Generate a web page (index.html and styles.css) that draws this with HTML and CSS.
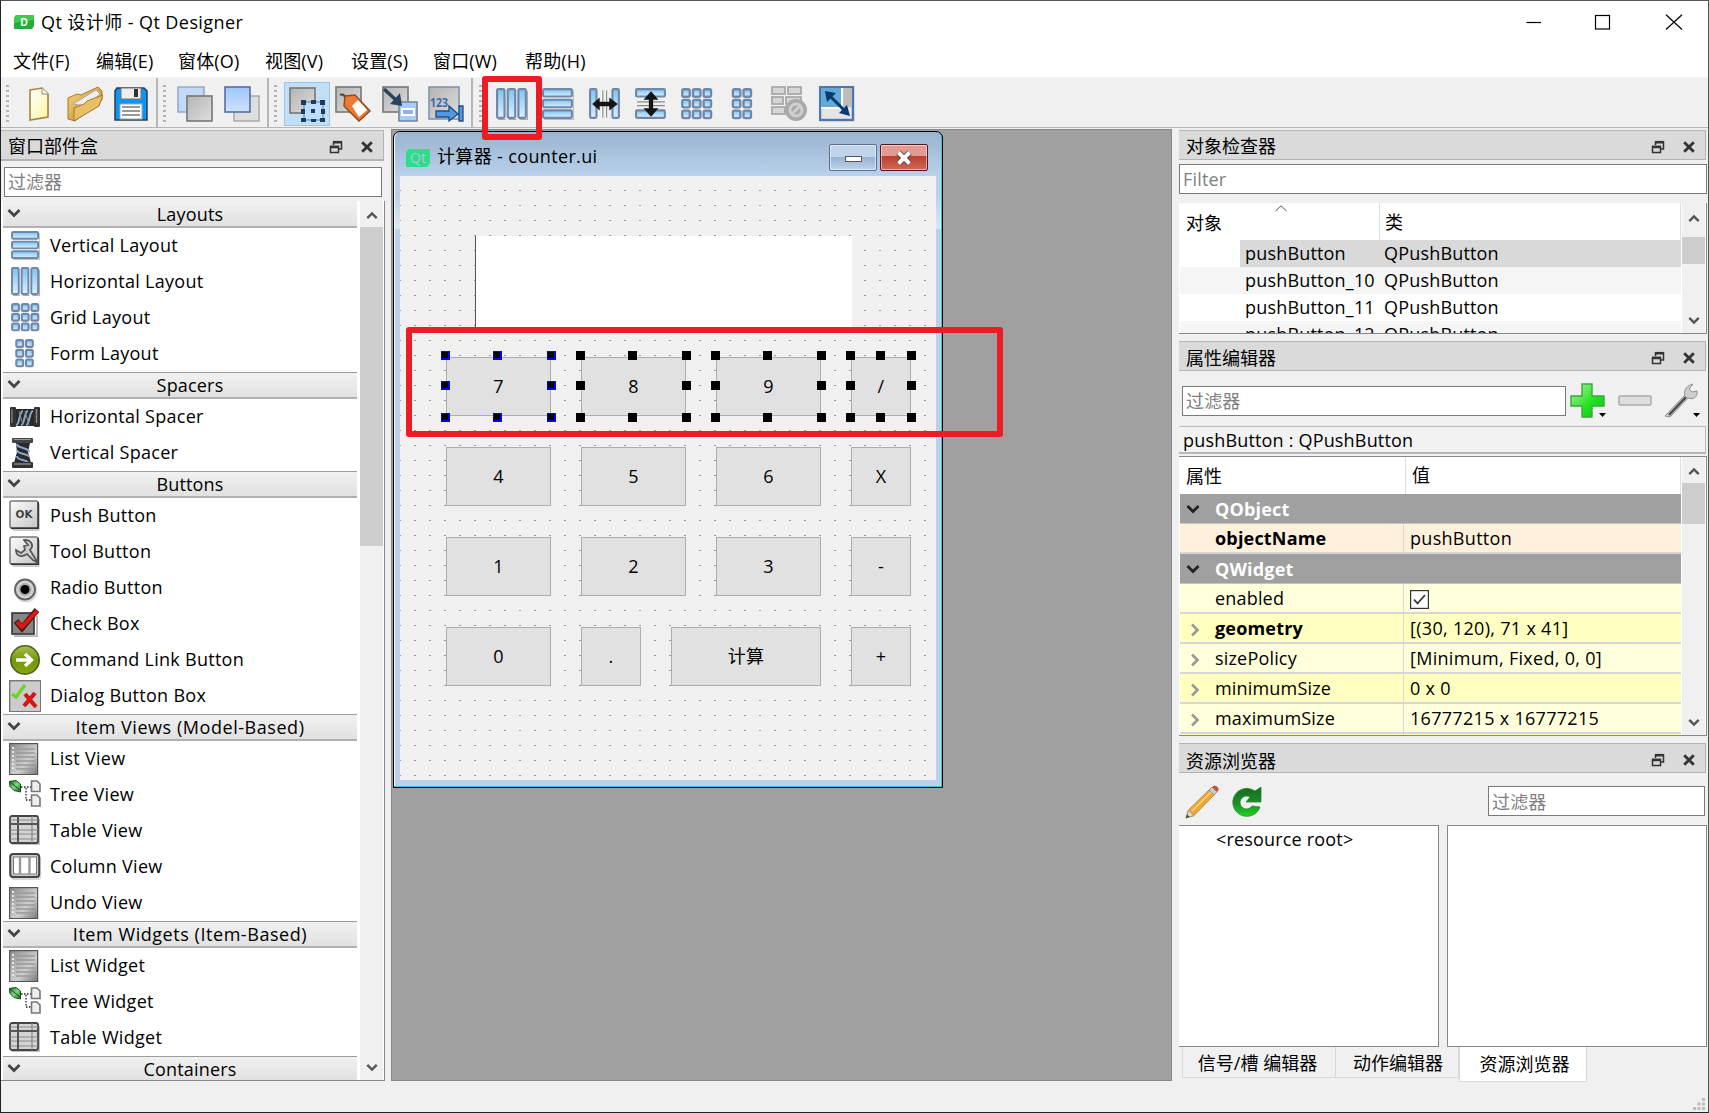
FILE: index.html
```html
<!DOCTYPE html>
<html lang="zh-CN">
<head>
<meta charset="utf-8">
<title>Qt 设计师 - Qt Designer</title>
<link rel="stylesheet" href="styles.css">
</head>
<body>
<svg class="defs" width="0" height="0">
  <defs>
    <linearGradient id="gBlue" x1="0" y1="0" x2="0" y2="1"><stop offset="0" stop-color="#7cc4f2"/><stop offset="1" stop-color="#dcf0ff"/></linearGradient>
    <linearGradient id="gBlue2" x1="0" y1="0" x2="0" y2="1"><stop offset="0" stop-color="#9ec6fb"/><stop offset="1" stop-color="#cfe2fc"/></linearGradient>
    <linearGradient id="gGray" x1="0" y1="0" x2="1" y2="1"><stop offset="0" stop-color="#b4b4b4"/><stop offset="1" stop-color="#dedede"/></linearGradient>
    <linearGradient id="gList" x1="0" y1="0" x2="1" y2="1"><stop offset="0" stop-color="#8a8a8a"/><stop offset=".6" stop-color="#cfcfcf"/><stop offset="1" stop-color="#777"/></linearGradient>
    <linearGradient id="gBtn" x1="0" y1="0" x2="1" y2="1"><stop offset="0" stop-color="#fdfdfd"/><stop offset="1" stop-color="#c4c4c4"/></linearGradient>
    <linearGradient id="gPage" x1="0" y1="0" x2="1" y2="1"><stop offset="0" stop-color="#ffffff"/><stop offset="1" stop-color="#fdf6a0"/></linearGradient>
    <linearGradient id="gGold" x1="0" y1="0" x2="1" y2="1"><stop offset="0" stop-color="#fbd982"/><stop offset="1" stop-color="#b87d1c"/></linearGradient>
    <linearGradient id="gGreen" x1="0" y1="0" x2="0" y2="1"><stop offset="0" stop-color="#0f6d1b"/><stop offset=".6" stop-color="#1f8f2b"/><stop offset="1" stop-color="#19dc19"/></linearGradient>
    <linearGradient id="gPlus" x1="0" y1="0" x2="1" y2="1"><stop offset="0" stop-color="#b4f5a4"/><stop offset=".6" stop-color="#1fe01f"/><stop offset="1" stop-color="#0cc40c"/></linearGradient>
    <linearGradient id="gOlive" x1="0" y1="0" x2="0" y2="1"><stop offset="0" stop-color="#a9bf4d"/><stop offset=".5" stop-color="#6f9a08"/><stop offset="1" stop-color="#86a510"/></linearGradient>
    <linearGradient id="gLeaf" x1="0" y1="0" x2="1" y2="1"><stop offset="0" stop-color="#1d5c22"/><stop offset=".5" stop-color="#7fd884"/><stop offset="1" stop-color="#1b6b22"/></linearGradient>
  </defs>
  <symbol id="chev-down" viewBox="0 0 14 10"><path d="M1.500 2 7 7.500 12.500 2" fill="none" stroke="currentColor" stroke-width="2.800"/></symbol>
  <symbol id="chev-up" viewBox="0 0 14 10"><path d="M1.500 8 7 2.500 12.500 8" fill="none" stroke="currentColor" stroke-width="2.800"/></symbol>
  <symbol id="chev-right" viewBox="0 0 10 14"><path d="M2 1.500 7.500 7 2 12.500" fill="none" stroke="currentColor" stroke-width="2.600"/></symbol>
  <symbol id="float" viewBox="0 0 14 14"><path d="M4.500 5V2H12.500V9H9.500" fill="none" stroke="#333" stroke-width="1.500"/><path d="M4 2.200H13" stroke="#333" stroke-width="2.600"/><rect x="1.500" y="6.500" width="8" height="6" fill="none" stroke="#333" stroke-width="1.500"/><path d="M1 7H10" stroke="#333" stroke-width="2.500"/></symbol>
  <symbol id="close" viewBox="0 0 12 12"><path d="M1.200 1.200 10.800 10.800M10.800 1.200 1.200 10.800" stroke="#333" stroke-width="2.800"/></symbol>

  <symbol id="vlay" viewBox="0 0 30 30"><path d="M2 29.500H29.500V2" fill="none" stroke="#999" stroke-opacity=".6"/><g fill="url(#gBlue)" stroke="#7187a8" stroke-width="2"><rect x="1" y="1" width="27" height="7" rx="1.200"/><rect x="1" y="11" width="27" height="7" rx="1.200"/><rect x="1" y="21" width="27" height="7" rx="1.200"/></g></symbol>
  <symbol id="hlay" viewBox="0 0 30 30"><path d="M2 29.500H9M12 29.500H19M22 29.500H29.500V3" fill="none" stroke="#aaa"/><g fill="url(#gBlue)" stroke="#7187a8" stroke-width="2"><rect x="1" y="1" width="7" height="27" rx="1.200"/><rect x="11" y="1" width="7" height="27" rx="1.200"/><rect x="21" y="1" width="7" height="27" rx="1.200"/></g></symbol>
  <symbol id="glay" viewBox="0 0 30 30"><g fill="url(#gBlue)" stroke="#7187a8" stroke-width="2.200"><rect x="1.200" y="1.200" width="7" height="7" rx="1.500"/><rect x="11.200" y="1.200" width="7" height="7" rx="1.500"/><rect x="21.200" y="1.200" width="7" height="7" rx="1.500"/><rect x="1.200" y="11.200" width="7" height="7" rx="1.500"/><rect x="11.200" y="11.200" width="7" height="7" rx="1.500"/><rect x="21.200" y="11.200" width="7" height="7" rx="1.500"/><rect x="1.200" y="21.200" width="7" height="7" rx="1.500"/><rect x="11.200" y="21.200" width="7" height="7" rx="1.500"/><rect x="21.200" y="21.200" width="7" height="7" rx="1.500"/></g></symbol>
  <symbol id="flay" viewBox="0 0 30 30"><g fill="url(#gBlue)" stroke="#7187a8" stroke-width="2.200"><rect x="5.500" y="1.200" width="7" height="7" rx="1.500"/><rect x="15.500" y="1.200" width="7" height="7" rx="1.500"/><rect x="5.500" y="11.200" width="7" height="7" rx="1.500"/><rect x="15.500" y="11.200" width="7" height="7" rx="1.500"/><rect x="5.500" y="21.200" width="7" height="7" rx="1.500"/><rect x="15.500" y="21.200" width="7" height="7" rx="1.500"/></g></symbol>
  <symbol id="hspace" viewBox="0 0 32 32"><path d="M7 8H26V25H7Z" fill="#26292e"/><path d="M7 24C11 24 10 10 14 10M12 24C16 24 15 10 19 10M17 24C21 24 20 10 24 10" fill="none" stroke="#8fa6c6" stroke-width="2"/><path d="M10 10 14 24M16 10 20 24" stroke="#888" stroke-width="1"/><rect x="1" y="6" width="6" height="20" rx="1" fill="#333"/><path d="M3 8V22" stroke="#999"/><rect x="25" y="6" width="6" height="20" rx="1" fill="#333"/><path d="M27.500 8V22" stroke="#888" stroke-width="1.500"/></symbol>
  <symbol id="vspace" viewBox="0 0 32 32"><path d="M7 6H21L19 15 22 26H5L8 15Z" fill="#26292e"/><path d="M8 7C8 12 20 10 20 15M8 13C8 18 20 16 20 20M8 19C8 24 18 22 19 26" fill="none" stroke="#8fa6c6" stroke-width="2"/><rect x="3" y="1" width="21" height="5" rx="1" fill="#444"/><path d="M5 2.500H22" stroke="#999"/><rect x="3" y="25" width="21" height="6" rx="1" fill="#333"/><path d="M5 27H22" stroke="#888" stroke-width="1.500"/></symbol>
  <symbol id="pushb" viewBox="0 0 32 32"><rect x="3" y="3" width="28" height="28" rx="2" fill="#999" opacity=".5"/><rect x="1" y="1" width="28" height="27" rx="2" fill="url(#gBtn)" stroke="#777" stroke-width="1.500"/><path d="M2 28.200H29.200V2" fill="none" stroke="#333" stroke-width="1.500"/><text x="15" y="17.500" text-anchor="middle" font-family="DejaVu Sans" font-weight="bold" font-size="10" fill="#444" textLength="17" lengthAdjust="spacingAndGlyphs">OK</text></symbol>
  <symbol id="toolb" viewBox="0 0 32 32"><rect x="3" y="3" width="28" height="28" rx="2" fill="#999" opacity=".5"/><rect x="1" y="1" width="28" height="27" rx="2" fill="url(#gBtn)" stroke="#777" stroke-width="1.500"/><path d="M2 28.200H29.200V2" fill="none" stroke="#333" stroke-width="1.500"/><path d="M15 4C20 3 24 7 23 11L21 14 29 27 24 24 18 18C12 22 7 20 7 14L12 17 16 14 15 10 19 9Z" fill="#ccc" stroke="#555" stroke-width="1.700"/></symbol>
  <symbol id="radio" viewBox="0 0 32 32"><circle cx="17" cy="19" r="11.500" fill="#bbb" opacity=".5"/><circle cx="16" cy="17.500" r="10" fill="#d4d4d4" stroke="#666" stroke-width="2"/><circle cx="16" cy="17.500" r="6.500" fill="#aaa"/><circle cx="16" cy="17.500" r="4.500" fill="#000"/></symbol>
  <symbol id="check" viewBox="0 0 32 32"><path d="M5 28H28V8" stroke="#bbb" stroke-width="2" fill="none"/><rect x="3" y="5" width="22" height="21" fill="#858585" stroke="#333" stroke-width="1.600"/><path d="M7 13 13 20 28 2" fill="none" stroke="#5a1512" stroke-width="6"/><path d="M8 14 13 19 28 3" fill="none" stroke="#d81a14" stroke-width="4"/></symbol>
  <symbol id="cmdlink" viewBox="0 0 32 32"><circle cx="16" cy="16" r="14.200" fill="url(#gOlive)" stroke="#4c6023" stroke-width="1.600"/><path d="M7 16H22M16 10 22.500 16 16 22" fill="none" stroke="#fff" stroke-width="3.400"/></symbol>
  <symbol id="dlgbox" viewBox="0 0 32 32"><rect x=".7" y=".7" width="31" height="31" fill="#ccc" stroke="#777" stroke-width="1.400"/><path d="M3 14 7 17 16 5" fill="none" stroke="#6ed327" stroke-width="3.400"/><path d="M16 14 27 27M26 13 15 26" stroke="#d31717" stroke-width="4.200"/></symbol>
  <symbol id="listv" viewBox="0 0 32 32"><rect x=".6" y=".6" width="28" height="31" fill="url(#gList)" stroke="#555" stroke-width="1.200"/><path d="M3 5H5M3 9H5M3 13H5M3 17H5M3 21H5M3 25H5" stroke="#e5e5e5" stroke-width="2"/><path d="M7 6H26M7 10H26M7 14H26M7 18H26M7 22H26M7 26H26" stroke="#999" stroke-width="1.500"/></symbol>
  <symbol id="treev" viewBox="0 0 32 32"><path d="M12 8H22M17 9V21H23" stroke="#222" stroke-width="1.300" stroke-dasharray="1.500 1.500" fill="none"/><path d="M0 2.500 7 1.500 11.500 5 11.500 13 5 11.500 1 7.500Z" fill="url(#gLeaf)" stroke="#1b4d20"/><path d="M1 3 11 11" stroke="#1b4d20"/><g fill="#eee" stroke="#777" stroke-width="1.600"><path d="M22.500 2H28L31 5V12.500H22.500Z"/><path d="M22.500 16H28L31 19V27H22.500Z"/></g></symbol>
  <symbol id="tablev" viewBox="0 0 32 32"><path d="M3 29H30V4" stroke="#999" stroke-width="2" fill="none" opacity=".6"/><rect x="1" y="1" width="28" height="27" rx="2" fill="#d4d4d4" stroke="#444" stroke-width="1.800"/><path d="M1 5H29M1 15H29M1 19H29M1 24H29M23 1V28" stroke="#888" stroke-width="1.200"/><path d="M1 9H29M9 1V28" stroke="#555" stroke-width="2"/></symbol>
  <symbol id="colv" viewBox="0 0 32 32"><rect x="2" y="5" width="30" height="24" rx="3" fill="#bbb" opacity=".6"/><rect x="1.200" y="3" width="29" height="23" rx="3" fill="#ccc" stroke="#444" stroke-width="2"/><rect x="4.500" y="6" width="23" height="17" fill="#fff" stroke="#777"/><path d="M11 6V23M20.500 6V23" stroke="#999" stroke-width="2.400"/></symbol>
  <symbol id="wrench" viewBox="0 0 36 36"><path d="M2 33 22 12C20 7 25 2 30 1L26 6 29 9 34 8C35 14 30 17 25 15L7 34Z" fill="#cfcfcf" stroke="#909090"/><path d="M6 32 23 14" stroke="#4d4d4d" stroke-width="2.500"/></symbol>
</svg>

<div class="window">
  <header class="titlebar">
    <svg class="app-icon" viewBox="0 0 20 14"><path d="M2 0H20V11L18 14H0V3Z" fill="#2aa83a"/><path d="M2 0H20V5L0 8V3Z" fill="#3ecb50"/><text x="10" y="11" text-anchor="middle" font-family="Liberation Sans" font-weight="bold" font-size="10" fill="#fff">D</text></svg>
    <span class="title-text">Qt 设计师 - Qt Designer</span>
    <svg class="win-controls" viewBox="0 0 160 16" fill="none" stroke="#000" stroke-width="1.200"><path d="M.5 8.500H15"/><rect x="69.500" y="1.500" width="14" height="13.500"/><path d="M140 .8 156 15.500M156 .8 140 15.500"/></svg>
  </header>
  <nav class="menubar"><span class="m1">文件(F)</span><span class="m2">编辑(E)</span><span class="m3">窗体(O)</span><span class="m4">视图(V)</span><span class="m5">设置(S)</span><span class="m6">窗口(W)</span><span class="m7">帮助(H)</span></nav>

  <div class="toolbars">
    <div class="bar bar-file">
      <i class="grip"></i>
      <svg class="ic" viewBox="0 0 36 36"><path d="M9 4 21 2 27 8V31L9 34Z" fill="url(#gPage)" stroke="#a9803f" stroke-width="1.600"/><path d="M21 2V8H27" fill="#fff" stroke="#888"/></svg>
      <svg class="ic" viewBox="0 0 36 36"><path d="M1 12 10 8 14 9 31 1 35 5V14L8 35 1 33Z" fill="url(#gGold)" stroke="#a8782a"/><path d="M6 18 29 4 33 8 20 20Z" fill="#eee" stroke="#aaa"/><path d="M7 22 17 18 20 15 36 9 32 20 7 35Z" fill="#eac067" stroke="#a8782a"/></svg>
      <svg class="ic" viewBox="0 0 36 36"><path d="M2 5 4 2H31L34 5V34H2Z" fill="#0d95f5" stroke="#263d52" stroke-width="1.500"/><rect x="8" y="2" width="20" height="11" fill="#eee" stroke="#777"/><rect x="21" y="3" width="4" height="8" fill="#333"/><rect x="7" y="18" width="22" height="15" fill="#fff" stroke="#9aa"/><path d="M9 21H27M9 25H27M9 29H27" stroke="#777" stroke-width="1.500"/></svg>
    </div>
    <div class="bar bar-z">
      <i class="grip"></i>
      <svg class="ic" viewBox="0 0 36 36"><rect x="1" y="1" width="26" height="25" fill="#c3daf6" stroke="#8fa5c4" stroke-width="1.400"/><rect x="10" y="10" width="25" height="25" fill="url(#gGray)" stroke="#777" stroke-width="1.600"/></svg>
      <svg class="ic" viewBox="0 0 36 36"><rect x="10" y="10" width="25" height="25" fill="#dedede" stroke="#a5a5a5" stroke-width="1.400"/><rect x="1" y="1" width="25" height="25" fill="url(#gBlue2)" stroke="#5670a0" stroke-width="1.600"/></svg>
    </div>
    <div class="bar bar-mode">
      <i class="grip"></i>
      <span class="pressed"><svg class="ic" viewBox="0 0 36 36"><rect x="1" y="2" width="25" height="25" fill="url(#gGray)" stroke="#777" stroke-width="1.600"/><rect x="15" y="16" width="19" height="18" fill="#bcdcff" stroke="#5b7ea8"/><path d="M12 14h5v5h-5zM22 14h5v4h-5zM31 14h5v5h-5zM12 23h4v5h-4zM22 23h4v4h-4zM32 23h4v5h-4zM12 32h5v4h-5zM22 33h5v3h-5zM31 32h5v4h-5z" fill="#1e3b5c"/></svg></span>
      <svg class="ic" viewBox="0 0 36 36"><rect x="1" y="1" width="25" height="25" fill="url(#gGray)" stroke="#777" stroke-width="1.600"/><path d="M5 9Q8 7 11 12" stroke="#444" fill="none" stroke-width="2"/><path d="M10 10 20 9 35 25 24 35 9 20Z" fill="#ee7a2f" stroke="#8c4d22" stroke-width="1.500"/><path d="M17 20 23 14 32 24 24 31Z" fill="#fff"/></svg>
      <svg class="ic" viewBox="0 0 36 36"><rect x="1" y="1" width="25" height="25" fill="url(#gGray)" stroke="#777" stroke-width="1.600"/><rect x="17" y="16" width="18" height="19" fill="#a8cdfb" stroke="#72839c" stroke-width="1.500"/><rect x="20" y="23" width="12" height="6" fill="#8db4e6" stroke="#fff" stroke-width="2"/><path d="M2 3 15 15" stroke="#29425f" stroke-width="3.500"/><path d="M20 20 8 18 18 7Z" fill="#29425f"/></svg>
      <svg class="ic" viewBox="0 0 36 36"><rect x="1" y="1" width="30" height="32" fill="url(#gGray)" stroke="#7d8ea8" stroke-width="1.500"/><text x="2" y="21" font-family="Open Sans" font-weight="bold" font-size="12.500" fill="#3b69a8" textLength="18" lengthAdjust="spacingAndGlyphs">123</text><path d="M8 25H21V20L30 28 21 35V31H8ZM31 20H35V35H31Z" fill="#4d9be6" stroke="#234c7a" stroke-width="1.300"/></svg>
    </div>
    <div class="bar bar-layout">
      <i class="grip"></i>
      <svg class="lic"><use href="#hlay"/></svg>
      <svg class="lic"><use href="#vlay"/></svg>
      <svg class="lic" viewBox="0 0 30 30"><g fill="url(#gBlue)" stroke="#7187a8" stroke-width="2"><rect x="1" y="1" width="6" height="27" rx="1"/><rect x="22" y="1" width="6" height="27" rx="1"/></g><path d="M13 2V28M16.500 2V28" stroke="#888"/><path d="M3 15 10 9V13H19V9L27 15 19 21V17H10V21Z" fill="#151515"/></svg>
      <svg class="lic" viewBox="0 0 30 30"><g fill="url(#gBlue)" stroke="#7187a8" stroke-width="2"><rect x="1" y="1" width="27" height="7" rx="1"/><rect x="1" y="21" width="27" height="7" rx="1"/></g><path d="M2 13H28M2 16.500H28" stroke="#888"/><path d="M15 3 22 11H17V19H22L15 27 8 19H13V11H8Z" fill="#151515"/></svg>
      <svg class="lic"><use href="#glay"/></svg>
      <svg class="lic"><use href="#flay"/></svg>
      <svg class="ic brk" viewBox="0 0 36 36"><g fill="#d6d6d6" stroke="#a9a9a9" stroke-width="1.800"><rect x="1" y="1" width="13" height="7"/><rect x="17" y="1" width="13" height="7"/><rect x="1" y="11" width="11" height="7"/><rect x="15" y="11" width="15" height="7"/><rect x="1" y="21" width="13" height="7"/></g><circle cx="25" cy="24" r="11" fill="#a9a9a9"/><circle cx="25" cy="24" r="6" fill="none" stroke="#cfcfcf" stroke-width="3"/><path d="M21 28 29 20" stroke="#cfcfcf" stroke-width="3"/></svg>
      <svg class="ic adj" viewBox="0 0 36 36"><rect x="1" y="1" width="33" height="33" fill="#e4e4e4" stroke="#4d76ad" stroke-width="2.400"/><rect x="2" y="2" width="20" height="19" fill="#63abd6"/><path d="M23 2V22H2" stroke="#fff" fill="none" stroke-width="2"/><path d="M24 2H33V21H24Z" fill="#bdbdbd"/><path d="M9 8 28 27" stroke="#083a75" stroke-width="3"/><path d="M6 5 17 7 8 16ZM31 30 20 27 28 19Z" fill="#083a75"/></svg>
    </div>
  </div>

  <main class="work">
    <section class="widgetbox">
      <div class="dock-title"><span>窗口部件盒</span><svg class="fl"><use href="#float"/></svg><svg class="cl"><use href="#close"/></svg></div>
      <div class="input">过滤器</div>
      <div class="tree">
        <div class="tree-list">
          <div class="cat"><svg><use href="#chev-down"/></svg><span>Layouts</span></div>
          <div class="item"><svg class="sm"><use href="#vlay"/></svg>Vertical Layout</div>
          <div class="item"><svg class="sm"><use href="#hlay"/></svg>Horizontal Layout</div>
          <div class="item"><svg class="sm"><use href="#glay"/></svg>Grid Layout</div>
          <div class="item"><svg class="sm"><use href="#flay"/></svg>Form Layout</div>
          <div class="cat"><svg><use href="#chev-down"/></svg><span>Spacers</span></div>
          <div class="item"><svg><use href="#hspace"/></svg>Horizontal Spacer</div>
          <div class="item"><svg><use href="#vspace"/></svg>Vertical Spacer</div>
          <div class="cat"><svg><use href="#chev-down"/></svg><span>Buttons</span></div>
          <div class="item"><svg><use href="#pushb"/></svg>Push Button</div>
          <div class="item"><svg><use href="#toolb"/></svg>Tool Button</div>
          <div class="item"><svg><use href="#radio"/></svg>Radio Button</div>
          <div class="item"><svg><use href="#check"/></svg>Check Box</div>
          <div class="item"><svg><use href="#cmdlink"/></svg>Command Link Button</div>
          <div class="item"><svg><use href="#dlgbox"/></svg>Dialog Button Box</div>
          <div class="cat wider"><svg><use href="#chev-down"/></svg><span>Item Views (Model-Based)</span></div>
          <div class="item"><svg><use href="#listv"/></svg>List View</div>
          <div class="item"><svg><use href="#treev"/></svg>Tree View</div>
          <div class="item"><svg><use href="#tablev"/></svg>Table View</div>
          <div class="item"><svg><use href="#colv"/></svg>Column View</div>
          <div class="item"><svg><use href="#listv"/></svg>Undo View</div>
          <div class="cat wider"><svg><use href="#chev-down"/></svg><span>Item Widgets (Item-Based)</span></div>
          <div class="item"><svg><use href="#listv"/></svg>List Widget</div>
          <div class="item"><svg><use href="#treev"/></svg>Tree Widget</div>
          <div class="item"><svg><use href="#tablev"/></svg>Table Widget</div>
          <div class="cat"><svg><use href="#chev-down"/></svg><span>Containers</span></div>
        </div>
        <div class="scroll sc-box"><svg><use href="#chev-up"/></svg><i></i><svg><use href="#chev-down"/></svg></div>
      </div>
    </section>

    <section class="mdi">
      <div class="form-window">
        <div class="form-title">
          <svg class="qt" viewBox="0 0 24 18"><path d="M3 0H24V14L21 18H0V3Z" fill="#2cde85"/><text x="12" y="14" text-anchor="middle" font-family="Open Sans" font-size="14" fill="#a9c9e6">Qt</text></svg>
          <span class="form-name">计算器 - counter.ui</span>
          <span class="fbtn fmin"><i></i></span>
          <span class="fbtn fclose"><svg viewBox="0 0 18 16"><path d="M3.500 2.500 14.500 13.500M14.500 2.500 3.500 13.500" stroke="#5b3a3a" stroke-width="6"/><path d="M3.500 2.500 14.500 13.500M14.500 2.500 3.500 13.500" stroke="#fff" stroke-width="4"/></svg></span>
        </div>
        <div class="canvas">
          <div class="display"></div>
          <div class="keypad">
            <div class="keys">
              <div class="key sel primary">7<i class="h nw"></i><i class="h n"></i><i class="h ne"></i><i class="h w"></i><i class="h e"></i><i class="h sw"></i><i class="h s"></i><i class="h se"></i></div>
              <div class="key sel">8<i class="h nw"></i><i class="h n"></i><i class="h ne"></i><i class="h w"></i><i class="h e"></i><i class="h sw"></i><i class="h s"></i><i class="h se"></i></div>
              <div class="key sel">9<i class="h nw"></i><i class="h n"></i><i class="h ne"></i><i class="h w"></i><i class="h e"></i><i class="h sw"></i><i class="h s"></i><i class="h se"></i></div>
              <div class="key narrow sel">/<i class="h nw"></i><i class="h n"></i><i class="h ne"></i><i class="h w"></i><i class="h e"></i><i class="h sw"></i><i class="h s"></i><i class="h se"></i></div>
            </div>
            <div class="keys"><div class="key">4</div><div class="key">5</div><div class="key">6</div><div class="key narrow">X</div></div>
            <div class="keys"><div class="key">1</div><div class="key">2</div><div class="key">3</div><div class="key narrow">-</div></div>
            <div class="keys"><div class="key">0</div><div class="key narrow">.</div><div class="key wide">计算</div><div class="key narrow">+</div></div>
          </div>
        </div>
      </div>
    </section>

    <aside class="docks">
      <section class="inspector">
        <div class="dock-title"><span>对象检查器</span><svg class="fl"><use href="#float"/></svg><svg class="cl"><use href="#close"/></svg></div>
        <div class="input">Filter</div>
        <div class="table">
          <div class="rows">
            <div class="thead"><span class="c-obj">对象</span><svg class="sort" viewBox="0 0 12 7"><path d="M.5 6 6 .8 11.500 6" fill="none" stroke="#555"/></svg><span class="c-cls">类</span></div>
            <div class="orow cur"><span>pushButton</span><span>QPushButton</span></div>
            <div class="orow alt"><span>pushButton_10</span><span>QPushButton</span></div>
            <div class="orow"><span>pushButton_11</span><span>QPushButton</span></div>
            <div class="orow alt"><span>pushButton_12</span><span>QPushButton</span></div>
          </div>
          <div class="scroll sc-obj"><svg><use href="#chev-up"/></svg><i></i><svg><use href="#chev-down"/></svg></div>
        </div>
      </section>

      <section class="props">
        <div class="dock-title"><span>属性编辑器</span><svg class="fl"><use href="#float"/></svg><svg class="cl"><use href="#close"/></svg></div>
        <div class="prop-tools">
          <div class="input">过滤器</div>
          <svg class="t-plus" viewBox="0 0 36 36"><path d="M12 1H22V13H34V23H22V34H12V23H1V13H12Z" fill="url(#gPlus)" stroke="#3aa83a" stroke-width="1.400"/><path d="M29 30H36L32.500 34Z" fill="#000"/></svg>
          <svg class="t-minus" viewBox="0 0 34 12"><rect x="1" y="1" width="32" height="9" rx="1" fill="#dedede" stroke="#ababab" stroke-width="1.500"/></svg>
          <span class="t-wrench"><svg><use href="#wrench"/></svg><svg class="tri" viewBox="0 0 7 4"><path d="M0 0H7L3.500 4Z"/></svg></span>
        </div>
        <div class="object-label">pushButton : QPushButton</div>
        <div class="table">
          <div class="rows">
            <div class="thead"><span class="c-prop">属性</span><span class="c-val">值</span></div>
            <div class="group"><svg><use href="#chev-down"/></svg>QObject</div>
            <div class="prow peach"><b>objectName</b><span>pushButton</span></div>
            <div class="group"><svg><use href="#chev-down"/></svg>QWidget</div>
            <div class="prow pale"><em>enabled</em><span><svg class="cb" viewBox="0 0 19 19"><rect x=".6" y=".6" width="17.800" height="17.800" fill="#fff" stroke="#333" stroke-width="1.200"/><path d="M4 9.500 7.500 13.500 15 5" fill="none" stroke="#333" stroke-width="1.800"/></svg></span></div>
            <div class="prow deep"><svg><use href="#chev-right"/></svg><b>geometry</b><span>[(30, 120), 71 x 41]</span></div>
            <div class="prow pale"><svg><use href="#chev-right"/></svg><em>sizePolicy</em><span>[Minimum, Fixed, 0, 0]</span></div>
            <div class="prow deep"><svg><use href="#chev-right"/></svg><em>minimumSize</em><span>0 x 0</span></div>
            <div class="prow pale"><svg><use href="#chev-right"/></svg><em>maximumSize</em><span>16777215 x 16777215</span></div>
            <div class="prow deep"><em></em><span></span></div>
          </div>
          <div class="scroll sc-prop"><svg><use href="#chev-up"/></svg><i></i><svg><use href="#chev-down"/></svg></div>
        </div>
      </section>

      <section class="resources">
        <div class="dock-title"><span>资源浏览器</span><svg class="fl"><use href="#float"/></svg><svg class="cl"><use href="#close"/></svg></div>
        <div class="res-tools">
          <svg viewBox="0 0 34 34"><path d="M1 33 3.500 25 26 3 31 8 9 30.500Z" fill="#eba93a" stroke="#a8782a" stroke-width=".8"/><path d="M1 33 3.500 25 9 30.500Z" fill="#ead6a8" stroke="#888" stroke-width=".8"/><path d="M1 33 2 29.500 4.500 32Z" fill="#444"/><path d="M7 26 27 6" stroke="#fbd27d" stroke-width="1.600"/><path d="M24 5 27 2 32 7 29 10Z" fill="#ccc" stroke="#888" stroke-width=".8"/><path d="M27 2Q30-.5 32.500 2T32 7Z" fill="#c9552f"/></svg>
          <svg viewBox="0 0 34 34"><path d="M31 22A14 14 0 1 1 26 6L32 2V17H17L21 12A6.500 6.500 0 1 0 23 21Z" fill="url(#gGreen)" stroke="#2a8a35" stroke-width=".8"/></svg>
          <div class="input">过滤器</div>
        </div>
        <div class="panes"><div class="pane">&lt;resource root&gt;</div><div class="pane"></div></div>
        <div class="tabs"><span class="tab t1">信号/槽 编辑器</span><span class="tab t2">动作编辑器</span><span class="tab t3">资源浏览器</span></div>
      </section>
    </aside>
  </main>
  <footer class="status"><svg viewBox="0 0 12 12" fill="#bdbdbd"><path d="M9 0h3v3H9zM9 4.500h3v3H9zM9 9h3v3H9zM4.500 4.500h3v3h-3zM4.500 9h3v3h-3zM0 9h3v3H0z"/></svg></footer>
  <div class="mark mark-tool"></div>
  <div class="mark mark-row"></div>
</div>
</body>
</html>
```
FILE: styles.css
```css
* { box-sizing: border-box; }
body {
  margin: 0;
  font-family: "Open Sans", "Noto Sans CJK SC", sans-serif;
  font-size: 18px;
  line-height: 24px;
  letter-spacing: 0.18px;
  color: #000;
  overflow: hidden;
}
.defs { position: absolute; }
svg { display: block; flex: none; }
svg text { letter-spacing: 0; }
em { font-style: normal; }

.window {
  position: relative;
  width: 1709px;
  height: 1113px;
  border: 1px solid #222;
  border-top-color: #5a5558;
  border-right-color: #555;
  background: #f0f0f0;
  display: flex;
  flex-direction: column;
  overflow: hidden;
}

/* title and menu */
.titlebar { height: 43px; background: #fff; display: flex; align-items: center; padding: 0 22px 2px 13px; flex: none; }
.app-icon { width: 20px; height: 14px; margin-right: 7px; }
.title-text { flex: 1; letter-spacing: 0.42px; }
.win-controls { width: 160px; height: 16px; }
.menubar { height: 34px; background: #fff; display: flex; align-items: center; border-bottom: 1px solid #f4f4f4; padding-left: 12px; white-space: nowrap; letter-spacing: 0.15px; flex: none; }
.m1 { width: 83px; }
.m2 { width: 82px; }
.m3 { width: 87px; }
.m4 { width: 86px; }
.m5 { width: 82px; }
.m6 { width: 92px; }

/* toolbars */
.toolbars { height: 51px; display: flex; padding-bottom: 1px; flex: none; }
.bar { height: 50px; display: flex; align-items: center; border-right: 2px solid #b6b6b6; border-bottom: 1px solid #b6b6b6; padding: 2px 0 0 5px; flex: none; }
.grip { width: 3px; height: 38px; background: repeating-linear-gradient(#b4b4b4 0 2px, transparent 2px 5px); flex: none; }
.ic { width: 36px; height: 36px; }
.lic { width: 32px; height: 32px; margin-right: 14.3px; }
.bar-file { width: 157px; }
.bar-file .ic { margin-right: 10px; }
.bar-file .grip { margin-right: 12px; }
.bar-z { width: 111px; }
.bar-z .grip { margin-right: 11px; }
.bar-z .ic { margin-right: 11px; }
.bar-mode { width: 204px; }
.bar-mode .grip { margin-right: 7px; }
.bar-mode > .ic { margin-right: 10.5px; }
.pressed { width: 46px; height: 44px; padding: 3px 4px; background: #c3def5; border: 1px solid #90c8f6; margin-right: 5px; flex: none; }
.bar-layout { flex: 1; border-right: 0; padding-left: 6px; }
.bar-layout .grip { margin-right: 14px; }
.bar-layout .brk { margin: 0 12px 0 -3px; }

.work { height: 952px; display: flex; flex: none; }

.dock-title { height: 31px; background: #dadada; border: 1px solid #b4b4b4; border-width: 1px 1px 2px 0; display: flex; align-items: center; flex: none; letter-spacing: 0; }
.dock-title span { flex: 1; padding: 2px 0 0 7px; }
.fl { width: 14px; height: 14px; margin: 3px 18px 0 0; }
.cl { width: 12px; height: 12px; margin: 4px 10px 0 0; }
.input { height: 30px; background: #fff; border: 1px solid #7a7a7a; color: #808080; padding: 2px 0 0 3px; }

/* widget box */
.widgetbox { width: 384px; display: flex; flex-direction: column; }
.widgetbox .dock-title { width: 383px; margin-top: 1px; }
.widgetbox .input { margin: 6px 3px 4px; width: 378px; flex: none; letter-spacing: 0; }
.tree { flex: 1; min-height: 0; border: 1px solid #828790; border-width: 0 1px 1px 0; background: #fff; display: flex; overflow: hidden; }
.tree-list { width: 358px; padding: 0 2px; }
.cat { height: 27px; display: flex; align-items: center; background: linear-gradient(#f1f1f1, #e1e1e1); border-top: 1px solid #9c9c9c; border-bottom: 2px solid #b0b0b0; width: 354px; }
.cat:first-child { border-top-color: #eee; }
.cat svg { width: 14px; height: 10px; margin: -2px 2px 0 4px; color: #444; }
.cat span { flex: 1; text-align: center; }
.wider { letter-spacing: 0.55px; }
.item { height: 36px; display: flex; align-items: center; padding: 0 0 2px 6px; white-space: nowrap; letter-spacing: 0.28px; }
.item svg { width: 32px; height: 32px; margin: 1px 9px 0 0; }
.item svg.sm { width: 29px; height: 29px; margin: 0 10px 0 2px; }

/* scrollbars */
.scroll { width: 25px; background: #f0f0f0; display: flex; flex-direction: column; align-items: center; border-left: 1px solid #fff; border-right: 1px solid #fff; color: #555; flex: none; }
.scroll svg { width: 12px; height: 9px; }
.scroll i { width: 100%; background: #cdcdcd; }
.scroll svg:last-child { margin-top: auto; }
.sc-box svg:first-child { margin: 10px 0 7px; }
.sc-box i { height: 319px; }
.sc-box svg:last-child { margin-bottom: 8px; }

/* form editor */
.mdi { margin-left: 6px; width: 781px; border: 1px solid #828790; background: #a0a0a0; padding: 1px; flex: none; }
.form-window { width: 550px; height: 657px; border: 1px solid #000; border-radius: 7px 7px 0 0; background: linear-gradient(#99b4d1, #b9d1ea 44px, #b9d1ea 62px, #d9e8f7 96px, #b9d1ea 98px); padding: 0 6px 7px 6px; box-shadow: inset -1px -1px #3fc4e0, inset 1px 0 #fff; }
.form-title { height: 44px; display: flex; align-items: flex-start; padding: 12px 8px 0 6px; }
.qt { width: 24px; height: 18px; margin: 5px 7px 0 0; }
.form-name { flex: 1; letter-spacing: 0.35px; }
.fbtn { width: 48px; height: 27px; border: 1px solid #5a6f94; border-radius: 2px; display: flex; align-items: center; justify-content: center; margin-left: 3px; box-shadow: inset 0 0 0 1px rgba(255, 255, 255, .5); }
.fmin { background: linear-gradient(#c0d4ea 48%, #98b2d0 48%, #bdd3ec); }
.fmin i { width: 17px; height: 6px; background: #fff; border: 1px solid #555; margin-top: 3px; }
.fclose { border-color: #5a1420; background: linear-gradient(#e29b92 45%, #bb3f2c 45%, #cf6a55); }
.fclose svg { width: 18px; height: 16px; }
.canvas {
  height: 604px;
  padding: 60px 0 0 46px;
  background: conic-gradient(from 90deg at 2px 1px, #f0f0f0 0 50%, #9a9a9a 0 75%, #f0f0f0 0) -1px 14px / 15px 15px;
}
.display { width: 377px; height: 91px; margin: 0 0 30px 29px; background: #fff; border-left: 1px solid #555; }
.keypad { display: flex; flex-direction: column; gap: 31px; }
.keys { display: flex; gap: 30px; }
.key { position: relative; width: 105px; height: 59px; background: #e1e1e1; border: 1px solid #adadad; display: flex; align-items: center; justify-content: center; padding-bottom: 1px; flex: none; }
.narrow { width: 60px; }
.wide { width: 150px; }
.h { position: absolute; width: 9px; height: 9px; background: #000; }
.primary .h { border: 1px solid #00f; border-width: 1px 2px 2px 1px; }
.nw, .n, .ne { top: -7px; }
.w, .e { top: 23px; }
.sw, .s, .se { bottom: -7px; }
.nw, .w, .sw { left: -6px; }
.n, .s { left: calc(50% - 5.5px); }
.ne, .e, .se { right: -6px; }

/* right docks */
.docks { margin-left: 7px; width: 528px; display: flex; flex-direction: column; flex: none; }
.docks section { flex: none; }
.docks .dock-title { height: 30px; width: 527px; border-bottom-width: 1px; }
.inspector { height: 212px; padding-top: 1px; display: flex; flex-direction: column; }
.inspector .input { margin: 4px 0 9px; flex: none; }
.table { display: flex; background: #fff; overflow: hidden; border-bottom: 1px solid #828790; border-right: 1px solid #828790; flex: none; }
.inspector .table { height: 131px; }
.rows { width: 502px; padding-left: 1px; flex: none; }
.thead { height: 37px; display: flex; align-items: center; background: #fff; border-right: 1px solid #ddd; letter-spacing: 0; }
.c-obj { width: 89px; padding: 2px 0 0 6px; }
.sort { width: 12px; height: 7px; margin: -26px 92px 0 6px; }
.c-cls { border-left: 1px solid #ddd; padding: 7px 0 0 5px; height: 100%; }
.orow { height: 27px; display: flex; }
.orow span { padding-top: 1px; }
.orow span:first-child { width: 139px; margin-left: 60px; padding-left: 5px; }
.orow span:last-child { flex: 1; padding-left: 5px; }
.cur span { background: #d9d9d9; }
.alt { background: #f5f5f5; }
.sc-obj svg:first-child { margin: 11px 0 14px; }
.sc-obj i { height: 27px; }
.sc-obj svg:last-child { margin-bottom: 8px; }

.props { height: 402px; display: flex; flex-direction: column; }
.props .dock-title span { padding-top: 4px; }
.prop-tools { height: 55px; display: flex; padding: 15px 0 0 3px; flex: none; }
.prop-tools .input { width: 384px; }
.t-plus { width: 36px; height: 36px; margin: -3px 0 0 4px; }
.t-minus { width: 34px; height: 12px; margin: 9px 0 0 12px; }
.t-wrench { position: relative; margin: -3px 0 0 11px; }
.t-wrench svg { width: 36px; height: 36px; }
.t-wrench .tri { position: absolute; width: 7px; height: 4px; left: 30px; top: 30px; }
.object-label { height: 28px; border: 1px solid #b8b8b8; border-width: 1px 1px 2px 0; padding: 1px 0 0 4px; background: #f2f2f2; margin-bottom: 2px; flex: none; width: 527px; }
.props .table { height: 280px; border-top: 1px solid #828790; }
.c-prop { width: 225px; padding-left: 6px; }
.c-val { border-left: 1px solid #ddd; padding: 6px 0 0 6px; height: 100%; }
.group { height: 30px; background: #a0a0a0; color: #fff; font-weight: bold; display: flex; align-items: center; border-bottom: 1px solid #c4c4c4; }
.group svg { width: 14px; height: 10px; color: #222; margin: 0 15px 0 6px; }
.prow { height: 30px; display: flex; border-bottom: 2px solid #d6d6d6; }
.prow > svg { width: 10px; height: 14px; color: #999; margin: 9px 15px 0 10px; }
.prow > b, .prow > em { flex: 1; padding-top: 2px; }
.prow > b:first-child, .prow > em:first-child { padding-left: 35px; }
.prow > span { width: 278px; border-left: 1px solid #d6d6d6; padding: 2px 0 0 6px; white-space: nowrap; letter-spacing: 0.3px; }
.cb { width: 19px; height: 19px; margin-top: 4px; }
.peach { background: #fff0dc; }
.pale { background: #ffffdc; }
.deep { background: #ffffbf; }
.sc-prop svg:first-child { margin: 10px 0 7px; }
.sc-prop i { height: 41px; }
.sc-prop svg:last-child { margin-bottom: 8px; }

.resources { display: flex; flex-direction: column; }
.resources .dock-title span { padding-top: 5px; }
.res-tools { height: 52px; display: flex; padding: 12px 2px 0 6px; }
.res-tools svg { width: 34px; height: 34px; margin-right: 10px; }
.res-tools .input { width: 217px; margin: 1px 0 0 auto; padding-top: 3px; }
.panes { height: 222px; display: flex; gap: 8px; }
.pane { width: 260px; background: #fff; border: 1px solid #828790; padding: 1px 0 0 37px; }
.pane:first-child { border-left: 0; }
.tabs { height: 34px; display: flex; align-items: flex-start; padding-left: 3px; letter-spacing: 0; }
.tab { height: 31px; border: 1px solid #d9d9d9; border-top: 0; text-align: center; padding-top: 4px; white-space: nowrap; }
.t1 { width: 154px; padding-right: 3px; }
.t2 { width: 123px; border-left: 0; padding-left: 2px; }
.t3 { width: 128px; height: 35px; background: #fff; padding-top: 5px; padding-left: 3px; }

.status { flex: 1; display: flex; justify-content: flex-end; align-items: flex-end; padding: 0 3px 2px; }
.status svg { width: 12px; height: 12px; }

/* highlight frames over the window */
.mark { position: absolute; border: 6px solid #ed1c24; border-radius: 3px; }
.mark-tool { left: 481px; top: 75px; width: 60px; height: 64px; }
.mark-row { left: 405px; top: 326px; width: 597px; height: 110px; }
```
